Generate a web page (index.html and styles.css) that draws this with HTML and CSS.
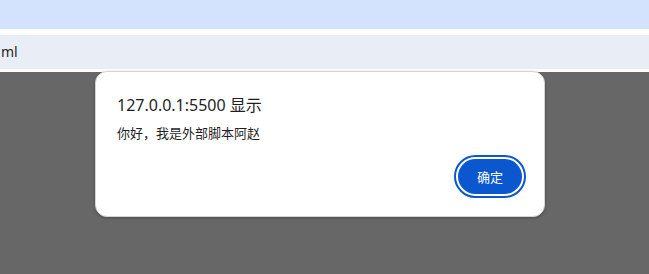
FILE: index.html
```html
<!DOCTYPE html>
<html lang="zh-CN">
<head>
    <meta charset="UTF-8">
    <meta name="viewport" content="width=device-width, initial-scale=1.0">
    <title>alert</title>
    <link rel="stylesheet" href="styles.css">
</head>
<body>

<div class="browser">
    <div class="tab-strip"></div>
    <div class="toolbar">
        <div class="address-bar">ml</div>
    </div>
    <div class="page">
        <div class="dialog">
            <div class="dialog-title">127.0.0.1:5500 显示</div>
            <div class="dialog-message">你好，我是外部脚本阿赵</div>
            <div class="dialog-actions">
                <button class="ok-btn">确定</button>
            </div>
        </div>
    </div>
</div>

</body>
</html>
```

FILE: styles.css
```css
/* Browser chrome + alert dialog */
body {
    margin: 0;
    padding: 0;
    font-family: "Noto Sans", "Noto Sans CJK SC", sans-serif;
    overflow: hidden;
}

.browser {
    display: flex;
    flex-direction: column;
    height: 274px;
}

.tab-strip {
    height: 29px;
    background-color: #d3e3fd;
}

.toolbar {
    background-color: #ffffff;
    padding: 6px 0 3px 0;
}

.address-bar {
    height: 34px;
    line-height: 33px;
    background-color: #e9eef6;
    color: #1f1f1f;
    font-size: 14px;
    padding-left: 1px;
}

.page {
    flex-grow: 1;
    background-color: #676767;
    position: relative;
}

.dialog {
    position: absolute;
    left: 95px;
    top: -1px;
    width: 448px;
    height: 144px;
    background-color: #ffffff;
    border: 1px solid #d4d4d4;
    border-radius: 12px;
    box-shadow: 0 1px 3px rgba(0, 0, 0, 0.25);
    display: flex;
    flex-direction: column;
}

.dialog-title {
    font-size: 16px;
    color: #1f1f1f;
    margin: 22px 0 0 21px;
    line-height: 22px;
}

.dialog-message {
    font-size: 13px;
    color: #1f1f1f;
    margin: 8px 0 0 21px;
    line-height: 18px;
}

.dialog-actions {
    display: flex;
    justify-content: flex-end;
    margin-top: auto;
    padding: 0 22px 22px 0;
}

.ok-btn {
    width: 64px;
    height: 35px;
    border: none;
    border-radius: 18px;
    background-color: #0b57d0;
    color: #ffffff;
    font-family: "Noto Sans CJK SC", sans-serif;
    font-size: 13px;
    outline: 2px solid #0b57d0;
    outline-offset: 2px;
    padding: 0;
}
```
